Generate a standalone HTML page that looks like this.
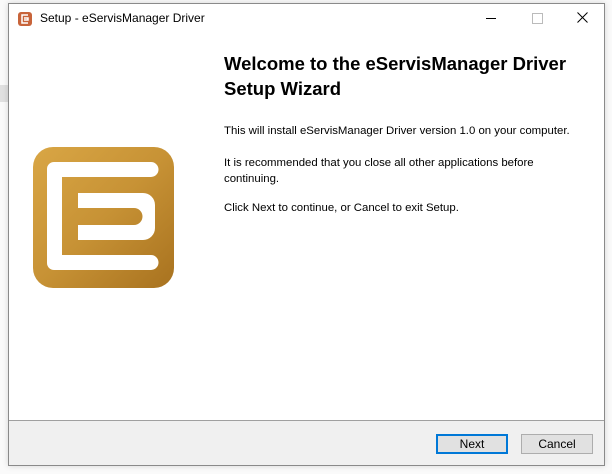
<!DOCTYPE html>
<html><head><style>
body{margin:0;width:612px;height:474px;background:#fafafa;position:relative;overflow:hidden;font-family:"Segoe UI","Liberation Sans",sans-serif}
.win{position:absolute;left:8px;top:3px;width:597px;height:463px;background:#fff;border:1px solid #8a8a8a;box-sizing:border-box;box-shadow:0 0 6px rgba(0,0,0,.15)}
.t{position:absolute;font-size:11.4px;color:#000}
.h{position:absolute;left:215px;top:47px;font-size:18.5px;font-weight:bold;line-height:25px;color:#000}
.bot{position:absolute;left:0;right:0;top:416px;bottom:0;background:#f0f0f0;border-top:1px solid #a0a0a0}
.btn{position:absolute;top:13px;width:72px;height:20px;background:#e1e1e1;border:1px solid #adadad;box-sizing:border-box;font-size:12px;text-align:center;line-height:18px}
</style></head><body>
<div style="position:absolute;left:0;top:85px;width:8px;height:17px;background:#e0e0e0"></div>
<div class="win">
<svg style="position:absolute;left:8px;top:7px" width="16" height="16" viewBox="0 0 16 16"><rect x="1" y="1" width="14" height="14" rx="3" fill="#c8643a"/><path d="M11 4H5v8h6M7 7h4v2H7" stroke="#fff" stroke-width="1.5" fill="none"/></svg>
<div class="t" style="left:31px;top:7px;font-size:12px">Setup - eServisManager Driver</div>
<div style="position:absolute;left:477px;top:14px;width:10px;height:1px;background:#000"></div>
<div style="position:absolute;left:523px;top:9px;width:9px;height:9px;border:1px solid #bbb"></div>
<svg style="position:absolute;left:568px;top:8px" width="11" height="11"><path d="M0.5 0.5L10.5 10.5M10.5 0.5L0.5 10.5" stroke="#000" stroke-width="1"/></svg>
<svg style="position:absolute;left:24px;top:143px" width="141" height="141" viewBox="0 0 141 141">
<defs><linearGradient id="g" x1="0" y1="0" x2="1" y2="1"><stop offset="0" stop-color="#d9a645"/><stop offset=".5" stop-color="#c79235"/><stop offset="1" stop-color="#a8721f"/></linearGradient></defs>
<rect x="0" y="0" width="141" height="141" rx="20" fill="url(#g)"/>
<path d="M14 22a7 7 0 0 1 7-7H118a7.5 7.5 0 0 1 0 15H29V108H118a7.5 7.5 0 0 1 0 15H21a7 7 0 0 1-7-7Z" fill="#fff"/>
<path d="M45 46H110a12 12 0 0 1 12 12V81a12 12 0 0 1-12 12H45V78H101a8.5 8.5 0 0 0 0-17H45Z" fill="#fff"/>
</svg>
<div class="h">Welcome to the eServisManager Driver<br>Setup Wizard</div>
<div class="t" style="left:215px;top:121px">This will install eServisManager Driver version 1.0 on your computer.</div>
<div class="t" style="left:215px;top:151px;line-height:16px">It is recommended that you close all other applications before<br>continuing.</div>
<div class="t" style="left:215px;top:198px">Click Next to continue, or Cancel to exit Setup.</div>
<div class="bot">
<div class="btn" style="left:427px;border:2px solid #0078d7;line-height:16px">Next</div>
<div class="btn" style="left:512px">Cancel</div>
</div>
</div>
</body></html>
